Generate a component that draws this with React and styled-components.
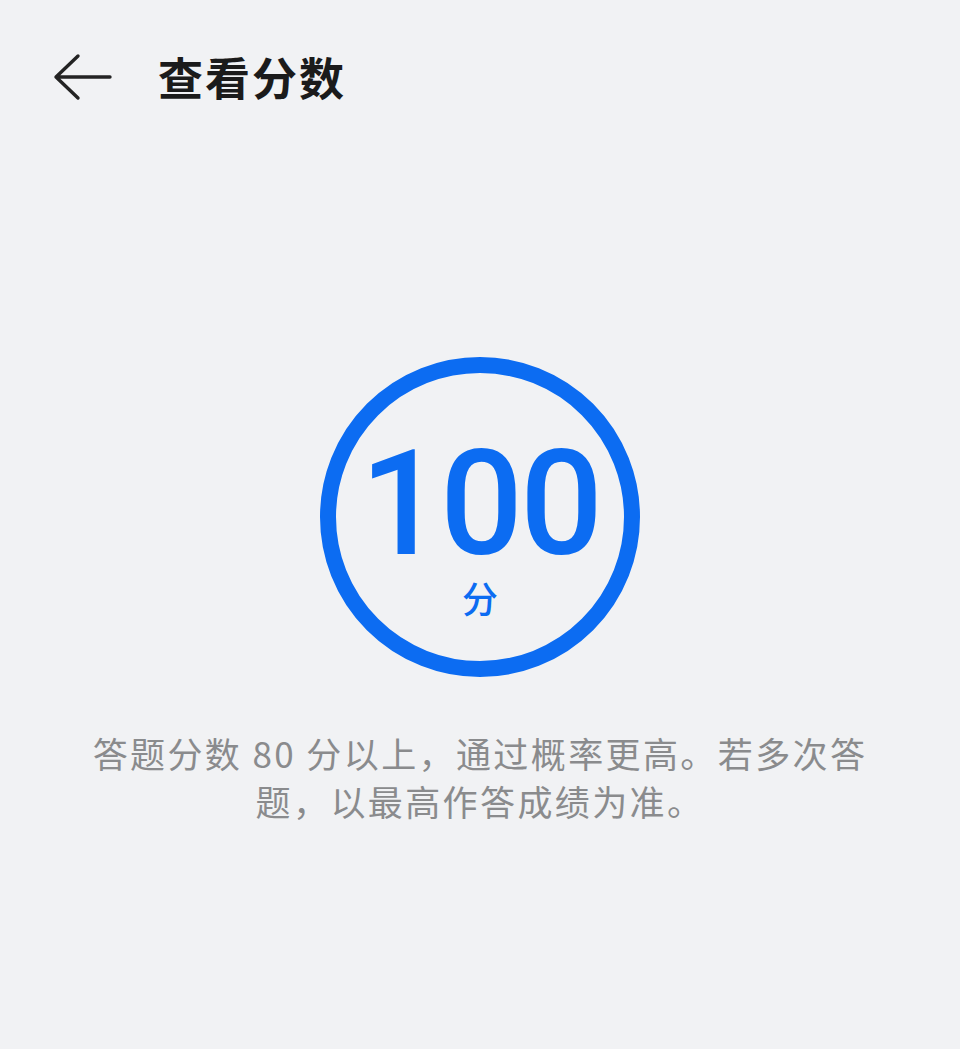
import React from 'react';
import styled, { createGlobalStyle } from 'styled-components';

const GlobalStyle = createGlobalStyle`
  html, body {
    margin: 0;
    padding: 0;
    background: #f1f2f4;
  }
  body {
    font-family: "Noto Sans CJK SC", "Noto Sans", sans-serif;
  }
`;

const Page = styled.div`
  min-height: 1049px;
  display: flex;
  flex-direction: column;
  align-items: center;
  background: #f1f2f4;
`;

const Header = styled.header`
  align-self: stretch;
  height: 56px;
  margin-top: 49px;
  padding-left: 52px;
  display: flex;
  align-items: center;
  gap: 44px;
`;

const BackButton = styled.button`
  border: 0;
  padding: 0;
  background: none;
  width: 62px;
  height: 50px;
  display: flex;
  align-items: center;
  cursor: pointer;
`;

const Title = styled.h1`
  margin: 0;
  font-size: 45px;
  font-weight: 600;
  color: #1b1b1b;
  letter-spacing: 2px;
  line-height: 56px;
`;

const ScoreRing = styled.div`
  margin-top: 252px;
  width: 320px;
  height: 320px;
  box-sizing: border-box;
  border: 16px solid #0c6cf2;
  border-radius: 50%;
  display: flex;
  flex-direction: column;
  align-items: center;
  justify-content: center;
  padding-top: 14px;
`;

const ScoreValue = styled.div`
  font-family: Roboto, "Noto Sans", sans-serif;
  font-weight: 500;
  font-size: 146px;
  line-height: 146px;
  color: #0c6cf2;
  letter-spacing: -3px;
`;

const ScoreUnit = styled.div`
  font-size: 36px;
  line-height: 38px;
  font-weight: 500;
  color: #0c6cf2;
`;

const Note = styled.p`
  margin: 52px 0 0;
  width: 800px;
  text-align: center;
  font-size: 35px;
  line-height: 48px;
  color: #8a8b8d;
  letter-spacing: 2.4px;
`;

const BackArrow = () => (
  <svg width="62" height="50" viewBox="0 0 62 50" fill="none">
    <path
      d="M4 25 H58 M26 4 L4 25 L26 46"
      stroke="#232323"
      strokeWidth="3.4"
      strokeLinecap="round"
      strokeLinejoin="round"
    />
  </svg>
);

export default function App() {
  return (
    <Page>
      <GlobalStyle />
      <Header>
        <BackButton aria-label="返回">
          <BackArrow />
        </BackButton>
        <Title>查看分数</Title>
      </Header>
      <ScoreRing>
        <ScoreValue>100</ScoreValue>
        <ScoreUnit>分</ScoreUnit>
      </ScoreRing>
      <Note>答题分数 80 分以上，通过概率更高。若多次答题，以最高作答成绩为准。</Note>
    </Page>
  );
}
